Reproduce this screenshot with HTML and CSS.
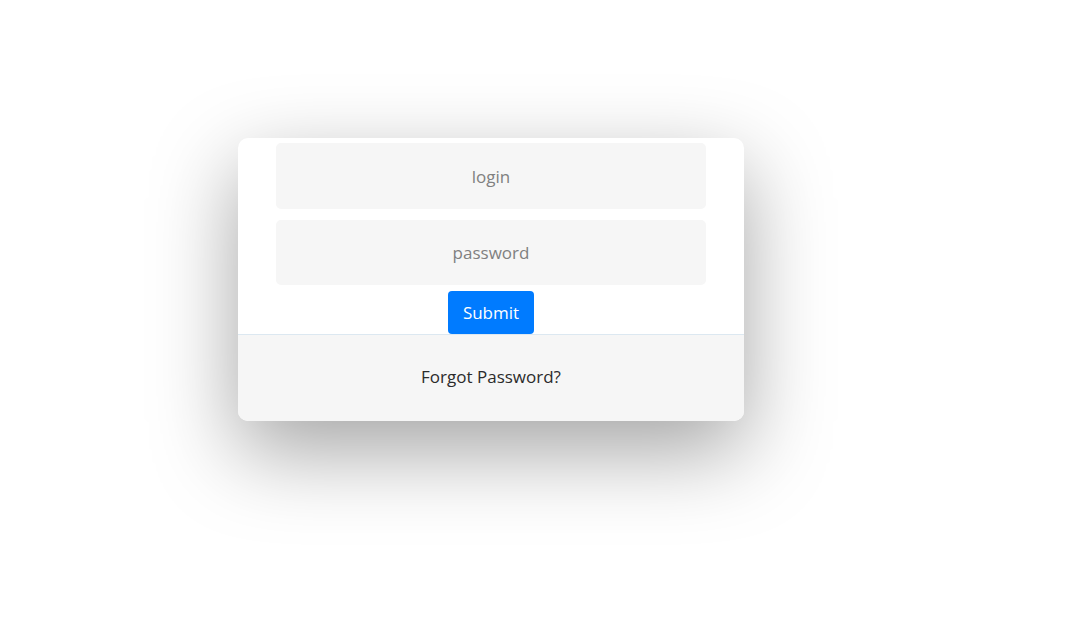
FILE: index.html
```html
<!DOCTYPE html>
<html>
<head>
<meta charset="utf-8">
<link rel="stylesheet" href="styles.css">
</head>
<body>
<div class="wrapper">
  <div class="form-content">
    <form class="login-form">
      <input type="text" class="field" placeholder="login">
      <input type="text" class="field" placeholder="password">
      <button type="button" class="submit">Submit</button>
    </form>
    <div class="form-footer">
      <a class="forgot" href="#">Forgot Password?</a>
    </div>
  </div>
</div>
</body>
</html>
```

FILE: styles.css
```css
html, body {
  margin: 0;
  padding: 0;
  background: #ffffff;
  font-family: "Open Sans", "Noto Sans", sans-serif;
}

.wrapper {
  box-sizing: border-box;
  width: 982px;
  min-height: 626px;
  display: flex;
  justify-content: center;
  align-items: flex-start;
  padding-top: 138px;
  padding-bottom: 100px;
}

.form-content {
  width: 506px;
  background: #ffffff;
  border-radius: 10px;
  box-shadow: 0 30px 85px 0 rgba(0, 0, 0, 0.36);
  text-align: center;
  overflow: hidden;
}

.login-form {
  display: flex;
  flex-direction: column;
  align-items: center;
  padding-top: 5px;
}

.field {
  box-sizing: border-box;
  width: 430px;
  height: 66px;
  margin: 0 0 11px;
  border: 2px solid #f6f6f6;
  border-radius: 5px;
  background: #f6f6f6;
  color: #0d0d0d;
  font-family: inherit;
  font-size: 17px;
  text-align: center;
  outline: none;
}

.field + .field {
  height: 65px;
  margin-bottom: 6px;
}

.field::placeholder {
  color: #808080;
}

.submit {
  box-sizing: border-box;
  width: 86px;
  height: 43px;
  border: none;
  border-radius: 4px;
  background: #007bff;
  color: #ffffff;
  font-family: inherit;
  font-size: 17px;
  padding: 0;
  cursor: pointer;
}

.form-footer {
  box-sizing: border-box;
  height: 87px;
  padding-bottom: 4px;
  background: #f6f6f6;
  border-top: 1px solid #dce8f1;
  display: flex;
  align-items: center;
  justify-content: center;
}

.forgot {
  color: #2b2b2b;
  text-decoration: none;
  font-size: 17px;
}
```
